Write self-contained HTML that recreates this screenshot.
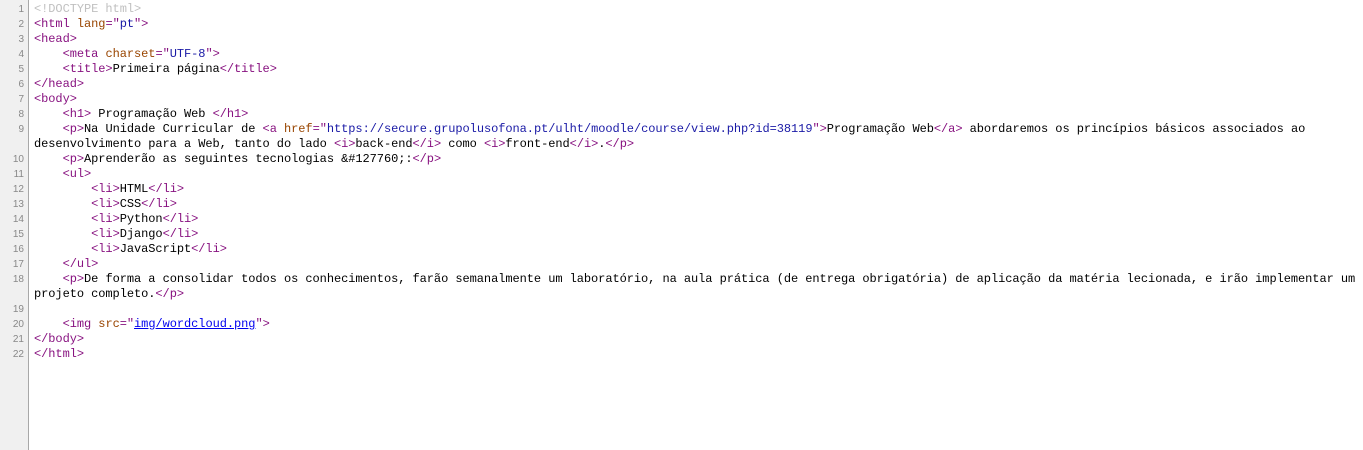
<!DOCTYPE html>
<html><head><meta charset="UTF-8"><style>
html,body{margin:0;padding:0;background:#fff;width:1363px;height:450px;overflow:hidden}
#g{position:absolute;left:0;top:0;width:28px;height:450px;background:#f0f0f0;border-right:1px solid #a8a8a8}
table{position:absolute;left:0;top:2px;border-collapse:collapse}
td{padding:0;vertical-align:top;line-height:15px}
td.n{width:24px;text-align:right;font:10px "Liberation Sans",sans-serif;color:#888;padding-right:4px;padding-top:1px;line-height:14px}
td.c{padding-left:6px;font:12px/15px "Liberation Mono",monospace;color:#000;white-space:pre;letter-spacing:-0.06px}
.t{color:#881280}.a{color:#994500}.v{color:#1a1aa6}.d{color:#c0c0c0}
.u{text-decoration:underline;color:#0000ee}
</style></head><body>
<div id="g"></div>
<table>
<tr><td class="n">1</td><td class="c"><span class="d">&lt;!DOCTYPE html&gt;</span></td></tr>
<tr><td class="n">2</td><td class="c"><span class="t">&lt;html </span><span class="a">lang</span><span class="t">="</span><span class="v">pt</span><span class="t">"&gt;</span></td></tr>
<tr><td class="n">3</td><td class="c"><span class="t">&lt;head&gt;</span></td></tr>
<tr><td class="n">4</td><td class="c">    <span class="t">&lt;meta </span><span class="a">charset</span><span class="t">="</span><span class="v">UTF-8</span><span class="t">"&gt;</span></td></tr>
<tr><td class="n">5</td><td class="c">    <span class="t">&lt;title&gt;</span>Primeira página<span class="t">&lt;/title&gt;</span></td></tr>
<tr><td class="n">6</td><td class="c"><span class="t">&lt;/head&gt;</span></td></tr>
<tr><td class="n">7</td><td class="c"><span class="t">&lt;body&gt;</span></td></tr>
<tr><td class="n">8</td><td class="c">    <span class="t">&lt;h1&gt;</span> Programação Web <span class="t">&lt;/h1&gt;</span></td></tr>
<tr><td class="n">9</td><td class="c">    <span class="t">&lt;p&gt;</span>Na Unidade Curricular de <span class="t">&lt;a </span><span class="a">href</span><span class="t">="</span><span class="v">https://secure.grupolusofona.pt/ulht/moodle/course/view.php?id=38119</span><span class="t">"&gt;</span>Programação Web<span class="t">&lt;/a&gt;</span> abordaremos os princípios básicos associados ao
desenvolvimento para a Web, tanto do lado <span class="t">&lt;i&gt;</span>back-end<span class="t">&lt;/i&gt;</span> como <span class="t">&lt;i&gt;</span>front-end<span class="t">&lt;/i&gt;</span>.<span class="t">&lt;/p&gt;</span></td></tr>
<tr><td class="n">10</td><td class="c">    <span class="t">&lt;p&gt;</span>Aprenderão as seguintes tecnologias &amp;#127760;:<span class="t">&lt;/p&gt;</span></td></tr>
<tr><td class="n">11</td><td class="c">    <span class="t">&lt;ul&gt;</span></td></tr>
<tr><td class="n">12</td><td class="c">        <span class="t">&lt;li&gt;</span>HTML<span class="t">&lt;/li&gt;</span></td></tr>
<tr><td class="n">13</td><td class="c">        <span class="t">&lt;li&gt;</span>CSS<span class="t">&lt;/li&gt;</span></td></tr>
<tr><td class="n">14</td><td class="c">        <span class="t">&lt;li&gt;</span>Python<span class="t">&lt;/li&gt;</span></td></tr>
<tr><td class="n">15</td><td class="c">        <span class="t">&lt;li&gt;</span>Django<span class="t">&lt;/li&gt;</span></td></tr>
<tr><td class="n">16</td><td class="c">        <span class="t">&lt;li&gt;</span>JavaScript<span class="t">&lt;/li&gt;</span></td></tr>
<tr><td class="n">17</td><td class="c">    <span class="t">&lt;/ul&gt;</span></td></tr>
<tr><td class="n">18</td><td class="c">    <span class="t">&lt;p&gt;</span>De forma a consolidar todos os conhecimentos, farão semanalmente um laboratório, na aula prática (de entrega obrigatória) de aplicação da matéria lecionada, e irão implementar um
projeto completo.<span class="t">&lt;/p&gt;</span></td></tr>
<tr><td class="n">19</td><td class="c"> </td></tr>
<tr><td class="n">20</td><td class="c">    <span class="t">&lt;img </span><span class="a">src</span><span class="t">="</span><span class="u">img/wordcloud.png</span><span class="t">"&gt;</span></td></tr>
<tr><td class="n">21</td><td class="c"><span class="t">&lt;/body&gt;</span></td></tr>
<tr><td class="n">22</td><td class="c"><span class="t">&lt;/html&gt;</span></td></tr>
</table>
</body></html>
